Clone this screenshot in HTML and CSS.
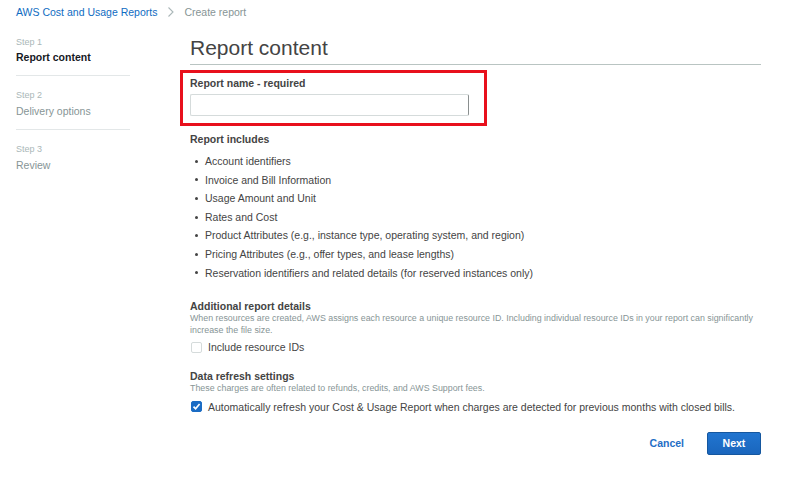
FILE: index.html
```html
<!DOCTYPE html>
<html lang="en">

<head>
    <meta charset="UTF-8">
    <meta name="viewport" content="width=device-width, initial-scale=1.0">
    <title>Create report</title>

    <link rel="stylesheet" href="styles.css">
</head>

<body>
    <div class="crumbs">
        <a class="crumb-link" href="#">AWS Cost and Usage Reports</a>
        <svg class="crumb-sep" width="8" height="12" viewBox="0 0 8 12">
            <polyline points="1.5,1.5 6,6 1.5,10.5" fill="none" stroke="#aab7b8" stroke-width="1.1" />
        </svg>
        <span class="crumb-here">Create report</span>
    </div>

    <div class="layout">
        <div class="steps">
            <div class="step">
                <div class="step-num">Step 1</div>
                <div class="step-name current">Report content</div>
            </div>
            <div class="step">
                <div class="step-num">Step 2</div>
                <div class="step-name">Delivery options</div>
            </div>
            <div class="step">
                <div class="step-num">Step 3</div>
                <div class="step-name">Review</div>
            </div>
        </div>

        <div class="main">
            <h1>Report content</h1>

            <div class="highlight">
                <div class="label">Report name - required</div>
                <input class="text-input" type="text">
            </div>

            <div class="label includes">Report includes</div>
            <ul class="includes-list">
                <li>Account identifiers</li>
                <li>Invoice and Bill Information</li>
                <li>Usage Amount and Unit</li>
                <li>Rates and Cost</li>
                <li>Product Attributes (e.g., instance type, operating system, and region)</li>
                <li>Pricing Attributes (e.g., offer types, and lease lengths)</li>
                <li>Reservation identifiers and related details (for reserved instances only)</li>
            </ul>

            <div class="label section">Additional report details</div>
            <p class="desc">When resources are created, AWS assigns each resource a unique resource ID. Including individual resource IDs in your report can significantly increase the file size.</p>
            <label class="check-row">
                <span class="box"></span>
                <span>Include resource IDs</span>
            </label>

            <div class="label section2">Data refresh settings</div>
            <p class="desc">These charges are often related to refunds, credits, and AWS Support fees.</p>
            <label class="check-row">
                <span class="box checked">
                    <svg width="9" height="9" viewBox="0 0 9 9">
                        <polyline points="1.5,4.6 3.6,6.8 7.6,2" fill="none" stroke="#fff" stroke-width="1.7" />
                    </svg>
                </span>
                <span>Automatically refresh your Cost &amp; Usage Report when charges are detected for previous months with closed bills.</span>
            </label>

            <div class="actions">
                <a class="btn-link" href="#">Cancel</a>
                <div class="btn-primary">Next</div>
            </div>
        </div>
    </div>
</body>

</html>
```

FILE: styles.css
```css
* {
    box-sizing: border-box;
}

body {
    margin: 0;
    background-color: #fff;
    font-family: "Liberation Sans", Arial, sans-serif;
    font-size: 10.5px;
    color: #444;
}

.crumbs {
    height: 24px;
    padding-left: 16px;
    display: flex;
    align-items: center;
}

.crumb-link {
    color: #0f6cc2;
    text-decoration: none;
}

.crumb-sep {
    margin: 0 9px 0 10px;
}

.crumb-here {
    color: #879596;
}

.layout {
    margin-top: 6px;
    display: flex;
}

.steps {
    width: 114px;
    margin-left: 16px;
    margin-right: 60px;
}

.step {
    padding: 12px 0 10px;
    border-bottom: 1px solid #e3e7e8;
}

.step:first-child {
    padding-top: 5px;
}

.step:last-child {
    border-bottom: none;
}

.step-num {
    font-size: 9px;
    line-height: 14px;
    color: #aab7b8;
}

.step-name {
    line-height: 16px;
    font-size: 10.5px;
    color: #879596;
    margin-top: 1px;
}

.step:first-child .step-name {
    margin-top: 0;
}

.step-name.current {
    color: #16191f;
    font-weight: bold;
}

.main {
    width: 571px;
}

h1 {
    margin: 0;
    padding: 6px 0 4px;
    font-size: 21px;
    line-height: 24px;
    font-weight: normal;
    color: #444;
    border-bottom: 1px solid #b9c4c2;
}

.highlight {
    width: 307px;
    margin: 5px 0 0 -10px;
    padding: 3px 7px 7px;
    border: 3px solid #e8101c;
}

.label {
    font-weight: bold;
    line-height: 14px;
    color: #444;
}

.text-input {
    display: block;
    width: 279px;
    height: 22px;
    margin: 4px 0 0;
    border: 1px solid #d5dbdb;
    border-right-color: #8a8f8f;
    border-radius: 2px;
    outline: none;
    font-family: inherit;
}

.includes {
    margin-top: 6px;
}

.includes-list {
    list-style: none;
    margin: 6px 0 0;
    padding: 0;
}

.includes-list li {
    display: flex;
    align-items: center;
    line-height: 18.6px;
}

.includes-list li::before {
    content: "";
    width: 3px;
    height: 3px;
    border-radius: 50%;
    background-color: #444;
    margin: 0 7px 0 5px;
}

.section {
    margin-top: 17px;
}

.section2 {
    margin-top: 14px;
}

.desc {
    margin: 0;
    font-size: 8.85px;
    line-height: 11.5px;
    color: #879596;
}

.check-row {
    display: flex;
    align-items: center;
    height: 16px;
    margin-top: 3px;
    line-height: 16px;
}

.section2 + .desc + .check-row {
    margin-top: 4px;
}

.box {
    width: 11px;
    height: 11px;
    margin: 0 6px 0 1px;
    border: 1px solid #d5dbdb;
    border-radius: 2px;
    display: flex;
    align-items: center;
    justify-content: center;
}

.box.checked {
    background-color: #1b6cc4;
    border-color: #1b6cc4;
}

.actions {
    margin-top: 17px;
    display: flex;
    justify-content: flex-end;
    align-items: center;
}

.btn-link {
    color: #1f6ec6;
    font-weight: bold;
    text-decoration: none;
    margin-right: 23px;
}

.btn-primary {
    width: 54px;
    height: 23px;
    line-height: 21px;
    text-align: center;
    color: #fff;
    font-weight: bold;
    background: linear-gradient(#2175d0, #1a66bd);
    border: 1px solid #15579f;
    border-radius: 2px;
    cursor: pointer;
}
```
